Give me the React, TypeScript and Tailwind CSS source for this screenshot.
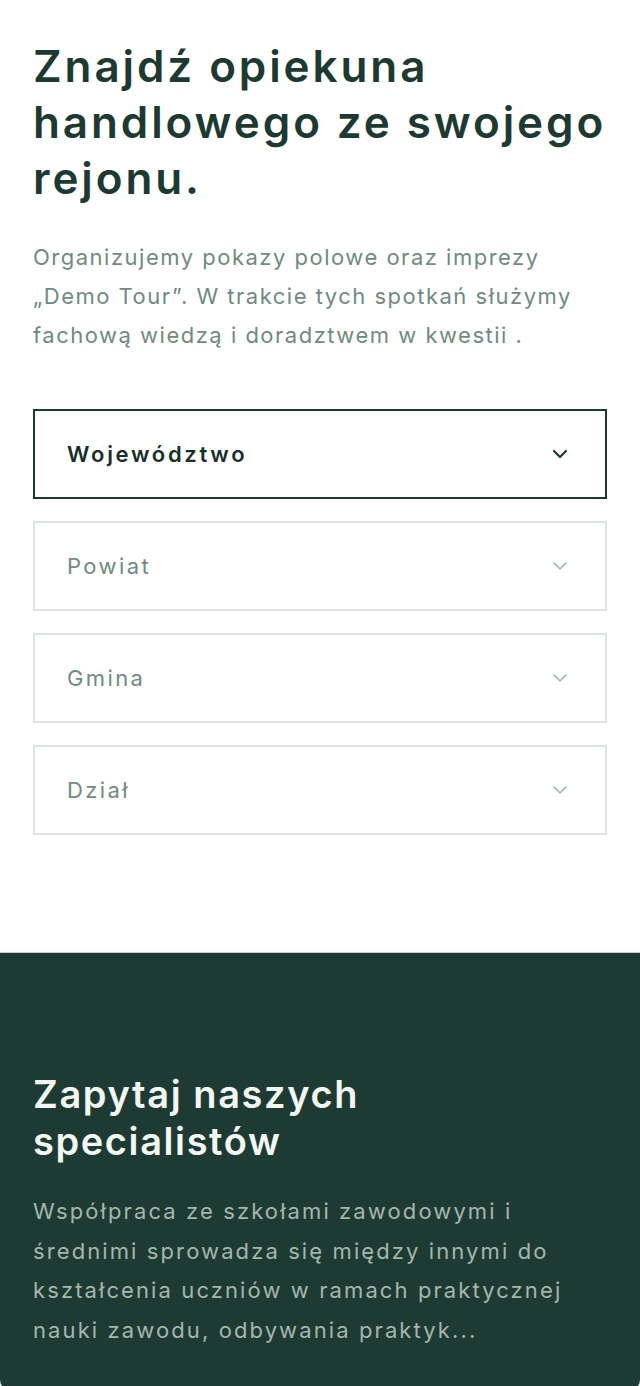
import React from 'react';

const Chevron = ({ dark }: { dark?: boolean }) => (
  <svg width="16" height="10" viewBox="0 0 16 10" fill="none" className={dark ? 'text-[#1d3a32]' : 'text-[#9fb3ab]'}>
    <path d="M2 2l6 6 6-6" stroke="currentColor" strokeWidth={dark ? 2.2 : 1.6} strokeLinecap="round" strokeLinejoin="round" />
  </svg>
);

const fields = [
  { label: 'Województwo', active: true },
  { label: 'Powiat' },
  { label: 'Gmina' },
  { label: 'Dział' },
];

const App = () => {
  return (
    <div className="min-h-[1386px] bg-white flex flex-col font-['Inter',sans-serif]">
      <div className="px-[33px] pt-[38px] pb-[117px]">
        <h1 className="text-[44px] leading-[56px] font-semibold text-[#1d3a32] tracking-[2.9px]">
          Znajdź opiekuna handlowego ze swojego rejonu.
        </h1>
        <p className="mt-[32px] text-[22px] leading-[39px] text-[#6f8b80] tracking-[1.5px]">
          Organizujemy pokazy polowe oraz imprezy „Demo Tour”. W trakcie tych spotkań służymy fachową wiedzą i doradztwem w kwestii .
        </p>
        <div className="mt-[54px] flex flex-col gap-[22px]">
          {fields.map((f) => (
            <div
              key={f.label}
              className={
                f.active
                  ? 'h-[90px] border-2 border-[#1d3a32] flex items-center justify-between pl-[32px] pr-[37px]'
                  : 'h-[90px] border-2 border-[#dde3e0] flex items-center justify-between pl-[32px] pr-[37px]'
              }
            >
              <span
                className={
                  f.active
                    ? 'text-[22px] font-semibold text-[#17302a] tracking-[2.7px]'
                    : 'text-[22px] text-[#6f8b80] tracking-[2.4px]'
                }
              >
                {f.label}
              </span>
              <Chevron dark={f.active} />
            </div>
          ))}
        </div>
      </div>
      <div className="flex-1 bg-[#1e3b33] border-t border-[#c9d0cd] rounded-b-[10px] px-[33px] pt-[118px] pb-[40px]">
        <h2 className="max-w-[420px] text-[38px] leading-[47px] font-semibold text-[#f2f7f4] tracking-[1.6px]">
          Zapytaj naszych specialistów
        </h2>
        <p className="mt-[27px] text-[22px] leading-[39.5px] text-[#a4b6ae] tracking-[2.1px]">
          Współpraca ze szkołami zawodowymi i średnimi sprowadza się między innymi do kształcenia uczniów w ramach praktycznej nauki zawodu, odbywania praktyk...
        </p>
      </div>
    </div>
  );
};

export default App;
